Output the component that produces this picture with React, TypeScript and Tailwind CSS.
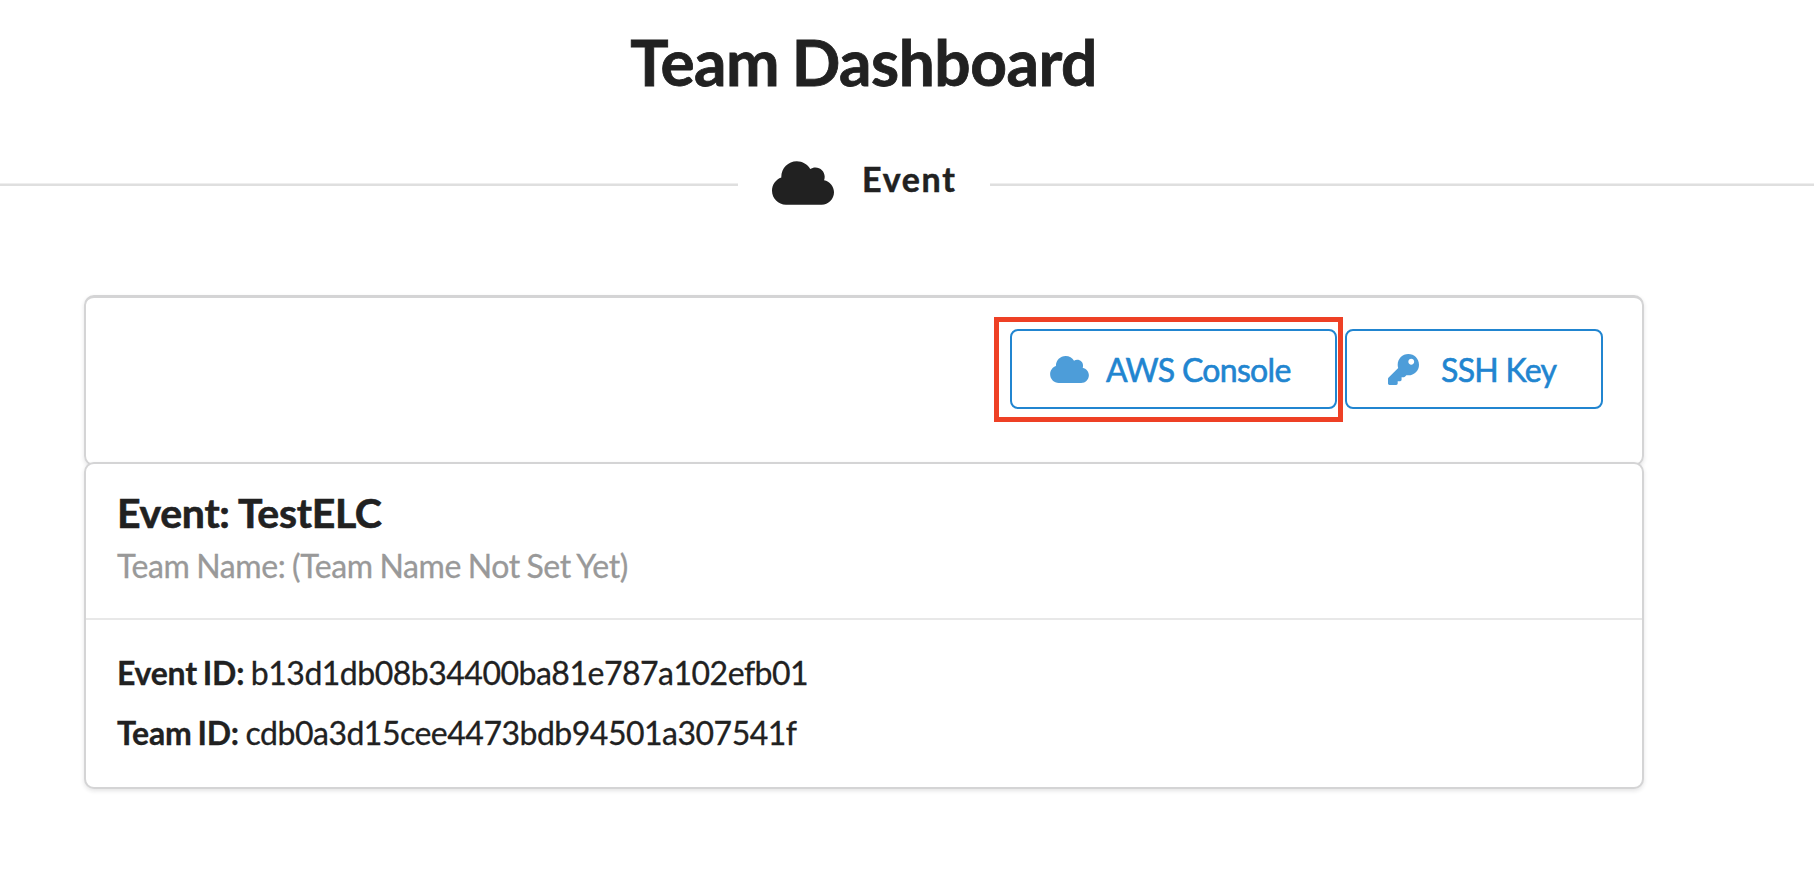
import { FaCloud, FaKey } from "react-icons/fa";

function Detail({ label, value }: { label: string; value: string }) {
  return (
    <div className="h-15 whitespace-nowrap leading-[60px] [-webkit-text-stroke:0.3px_#212121] [word-spacing:-1.5px]">
      <b className="font-bold tracking-[-0.25px]">{label}</b>{" "}
      <span className="tracking-[-0.5px]">{value}</span>
    </div>
  );
}

export default function App() {
  return (
    <div className="h-[878px] w-[1814px] overflow-hidden bg-white font-['Lato',sans-serif] text-[32px] text-[#212121]">
      <h1 className="h-[124px] w-[1727px] pt-[21px] text-center text-[64px] font-bold leading-[82px] tracking-[-0.5px] [-webkit-text-stroke:0.8px_#212121] [word-spacing:-2.5px]">
        Team Dashboard
      </h1>

      <div className="flex h-[121px] items-center">
        <div className="h-[3px] w-[738px] border-t border-[#eeeeee] bg-[#dfdfdf]" />
        <div className="-mt-[4px] flex w-[252px] items-center pl-[34px]">
          <FaCloud className="h-[50px] w-[62px] shrink-0" />
          <h4 className="ml-[28px] -mt-[7px] text-[34px] font-bold leading-[44px] tracking-[0.05em] [-webkit-text-stroke:0.5px_#212121]">
            Event
          </h4>
        </div>
        <div className="h-[3px] flex-1 border-t border-[#eeeeee] bg-[#dfdfdf]" />
      </div>

      <main className="ml-[84px] mt-[50px] w-[1560px]">
        <section className="flex h-[171px] items-start justify-end gap-2 rounded-[10px] border-2 border-t-[3px] border-[#d4d4d5] pr-[39px] pt-[31px] shadow-[0_2px_4px_rgba(34,36,38,0.12)]">
          <div className="relative">
            <button className="flex h-20 w-[327px] items-center rounded-lg border-2 border-[#2185d0] pl-[38px] text-[#2185d0]">
              <FaCloud className="h-[31px] w-[39px] opacity-80" />
              <span className="ml-[17px] mt-px whitespace-nowrap tracking-[-0.7px] [-webkit-text-stroke:0.6px_#2185d0]">
                AWS Console
              </span>
            </button>
            <div className="absolute -left-4 -top-3 h-[105px] w-[349px] border-[5px] border-[#ee4025]" />
          </div>
          <button className="flex h-20 w-[258px] items-center rounded-lg border-2 border-[#2185d0] pl-[41px] text-[#2185d0]">
            <FaKey className="h-[31px] w-[31px] opacity-80" />
            <span className="ml-[22px] mt-px whitespace-nowrap tracking-[-0.7px] [-webkit-text-stroke:0.6px_#2185d0]">
              SSH Key
            </span>
          </button>
        </section>

        <section className="relative -mt-1 h-[327px] rounded-[10px] border-2 border-[#d4d4d5] bg-white shadow-[0_2px_4px_rgba(34,36,38,0.12)]">
          <header className="h-[156px] border-b-2 border-[#e8e8e8] pl-[31px] pt-[23px]">
            <h2 className="text-[41px] font-bold leading-[52px] tracking-[-0.3px] [-webkit-text-stroke:0.6px_#212121]">
              Event: TestELC
            </h2>
            <p className="mt-px leading-[52px] tracking-[-0.41px] text-[#999999] [-webkit-text-stroke:0.3px_#999999] [word-spacing:-1px]">
              Team Name: (Team Name Not Set Yet)
            </p>
          </header>
          <div className="pl-[31px] pt-[23px]">
            <Detail label="Event ID:" value="b13d1db08b34400ba81e787a102efb01" />
            <Detail label="Team ID:" value="cdb0a3d15cee4473bdb94501a307541f" />
          </div>
        </section>
      </main>
    </div>
  );
}
